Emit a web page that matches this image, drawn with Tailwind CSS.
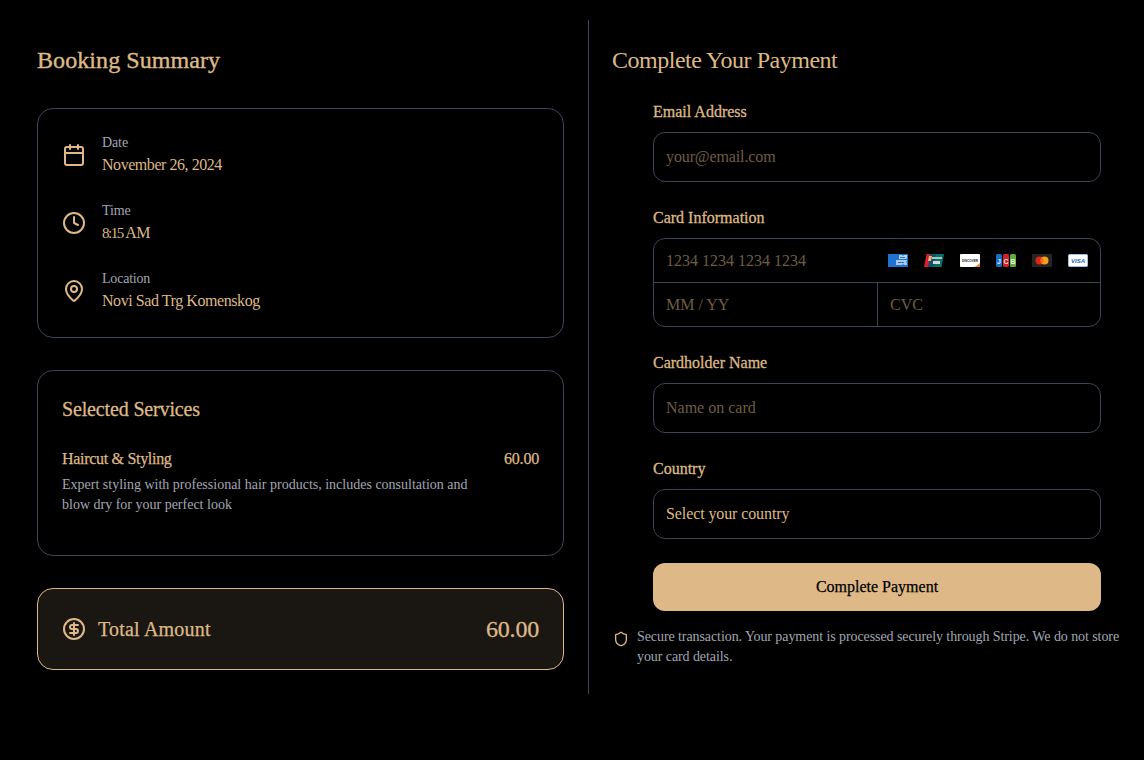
<!DOCTYPE html>
<html lang="en">
<head>
  <meta charset="UTF-8" />
  <meta name="viewport" content="width=device-width, initial-scale=1.0" />
  <title>Complete Your Payment</title>
  <script src="https://cdn.jsdelivr.net/npm/@tailwindcss/browser@4"></script>
</head>
<body class="bg-black text-[#deb887] font-['Liberation_Serif',serif] h-[760px] overflow-hidden">
  <div class="flex pt-5">
    <!-- Booking summary -->
    <div class="w-[589px] border-r border-[#3b4556] pl-[37px] pr-6 py-6">
      <h2 class="text-2xl h-8 leading-8 mb-8 tracking-[0.08px] [-webkit-text-stroke:0.4px_#deb887]">Booking Summary</h2>

      <div class="border border-[#3b4556] rounded-2xl p-6 flex flex-col gap-6 mb-8">
        <div class="flex items-center gap-4">
          <svg class="w-6 h-6" viewBox="0 0 24 24" fill="none" stroke="#deb887" stroke-width="2" stroke-linecap="round" stroke-linejoin="round"><path d="M8 2v4"/><path d="M16 2v4"/><rect x="3" y="4" width="18" height="18" rx="2"/><path d="M3 10h18"/></svg>
          <div>
            <p class="text-sm h-5 leading-5 text-[#a1a7b3] tracking-[-0.1px]">Date</p>
            <p class="text-base h-6 leading-6 tracking-[-0.45px]">November 26, 2024</p>
          </div>
        </div>
        <div class="flex items-center gap-4">
          <svg class="w-6 h-6" viewBox="0 0 24 24" fill="none" stroke="#deb887" stroke-width="2" stroke-linecap="round" stroke-linejoin="round"><circle cx="12" cy="12" r="10"/><path d="M12 6v6l4 2"/></svg>
          <div>
            <p class="text-sm h-5 leading-5 text-[#a1a7b3] tracking-[-0.1px]">Time</p>
            <p class="text-base h-6 leading-6 tracking-[-0.6px]"><span class="text-[15px] tracking-[-1.5px]">8:15</span> AM</p>
          </div>
        </div>
        <div class="flex items-center gap-4">
          <svg class="w-6 h-6" viewBox="0 0 24 24" fill="none" stroke="#deb887" stroke-width="2" stroke-linecap="round" stroke-linejoin="round"><path d="M20 10c0 4.993-5.539 10.193-7.399 11.799a1 1 0 0 1-1.202 0C9.539 20.193 4 14.993 4 10a8 8 0 0 1 16 0"/><circle cx="12" cy="10" r="3"/></svg>
          <div>
            <p class="text-sm h-5 leading-5 text-[#a1a7b3] tracking-[-0.2px]">Location</p>
            <p class="text-base h-6 leading-6 tracking-[-0.43px]">Novi Sad Trg Komenskog</p>
          </div>
        </div>
      </div>

      <div class="border border-[#3b4556] rounded-2xl p-6 h-[186px] mb-8">
        <h3 class="text-xl h-7 leading-7 mb-6 tracking-[-0.15px] [-webkit-text-stroke:0.3px_#deb887]">Selected Services</h3>
        <div class="flex justify-between">
          <div>
            <p class="text-base h-6 leading-6 tracking-[-0.3px] [-webkit-text-stroke:0.25px_#deb887]">Haircut &amp; Styling</p>
            <p class="text-sm leading-5 text-[#a1a7b3] mt-1">Expert styling with professional hair products, includes consultation and<br>blow dry for your perfect look</p>
          </div>
          <p class="text-base h-6 leading-6 tracking-[-0.2px] [-webkit-text-stroke:0.25px_#deb887]">60.00</p>
        </div>
      </div>

      <div class="border border-[#deb887] bg-[#1a1712] rounded-2xl p-6 flex items-center justify-between">
        <div class="flex items-center gap-3">
          <svg class="w-6 h-6" viewBox="0 0 24 24" fill="none" stroke="#deb887" stroke-width="2" stroke-linecap="round" stroke-linejoin="round"><circle cx="12" cy="12" r="10"/><path d="M16 8h-6a2 2 0 1 0 0 4h4a2 2 0 1 1 0 4H8"/><path d="M12 18V6"/></svg>
          <span class="text-xl leading-8 tracking-[0.2px] [-webkit-text-stroke:0.25px_#deb887]">Total Amount</span>
        </div>
        <span class="text-2xl leading-8 tracking-[-0.2px] [-webkit-text-stroke:0.3px_#deb887]">60.00</span>
      </div>
    </div>

    <!-- Payment form -->
    <div class="pl-[23px] py-6 w-[555px]">
      <h2 class="text-2xl h-8 leading-8 mb-6 tracking-[-0.48px]">Complete Your Payment</h2>

      <form class="w-[448px] ml-[41px] flex flex-col gap-6">
        <div>
          <label class="block text-base h-6 leading-6 mb-2 [-webkit-text-stroke:0.3px_#deb887]">Email Address</label>
          <input type="email" placeholder="your@email.com" class="block w-full h-[50px] px-3 bg-black border border-[#3b4556] rounded-xl text-base tracking-[-0.12px] outline-none placeholder:text-[#6f5c44]" />
        </div>

        <div>
          <label class="block text-base h-6 leading-6 mb-2 [-webkit-text-stroke:0.3px_#deb887]">Card Information</label>
          <div class="border border-[#3b4556] rounded-xl">
            <div class="flex items-center h-11 pl-3 pr-3 border-b border-[#3b4556]">
              <input placeholder="1234 1234 1234 1234" class="flex-1 min-w-0 bg-transparent text-base outline-none placeholder:text-[#6f5c44]" />
              <div class="flex gap-4">
                <!-- amex -->
                <svg class="w-5 h-[13px]" viewBox="0 0 20 13"><rect width="20" height="13" fill="#1f72cd"/><path d="M11 1h3l1 1 1-1h3v3l-1 1h-7z" fill="#b9d2f0"/><path d="M8 6h11v1l-1 1 1 1v2h-3l-1-1-1 1H8z" fill="#a9c8ec"/><rect x="12" y="3" width="5" height="1" fill="#1f72cd"/><rect x="10" y="8" width="6" height="1" fill="#1f72cd"/></svg>
                <!-- unionpay -->
                <svg class="w-5 h-[13px]" viewBox="0 0 20 13"><path d="M2.5 0H9L6.5 13H0z" fill="#d6202c"/><path d="M6 0h8l-2.5 13H4z" fill="#15506b"/><path d="M12 0h8l-2.5 13H10z" fill="#0b6f6c"/><path d="M5 2h3l-1 5H4z" fill="#e8b27c"/><rect x="8" y="3" width="10" height="2" fill="#a8c4bc"/><rect x="9" y="7" width="7" height="3" fill="#d0dcd8"/></svg>
                <!-- discover -->
                <svg class="w-5 h-[13px]" viewBox="0 0 20 13"><rect width="20" height="13" rx="1" fill="#fff"/><text x="10" y="7.6" font-size="3.1" font-family="Liberation Sans" font-weight="700" text-anchor="middle" fill="#222">DISCOVER</text><path d="M14 13q3-1 6-4v4z" fill="#f58220"/></svg>
                <!-- jcb -->
                <svg class="w-5 h-[13px]" viewBox="0 0 20 13"><rect width="6" height="13" rx="1.5" fill="#1a6fc4"/><rect x="7" width="6" height="13" rx="1.5" fill="#d5202a"/><rect x="14" width="6" height="13" rx="1.5" fill="#5fae3c"/><text x="3" y="9.5" font-size="7" font-family="Liberation Sans" font-weight="700" text-anchor="middle" fill="#e6eefa">J</text><text x="10" y="9.5" font-size="7" font-family="Liberation Sans" font-weight="700" text-anchor="middle" fill="#f5dcdc">C</text><text x="17" y="9.5" font-size="7" font-family="Liberation Sans" font-weight="700" text-anchor="middle" fill="#e6f2dc">B</text></svg>
                <!-- mastercard -->
                <svg class="w-5 h-[13px]" viewBox="0 0 20 13"><rect width="20" height="13" rx="1" fill="#252525"/><circle cx="7.5" cy="6.5" r="4" fill="#e2231a"/><circle cx="12.5" cy="6.5" r="4" fill="#f79e1b"/><path d="M10 3.4a4 4 0 0 1 0 6.2a4 4 0 0 1 0-6.2z" fill="#f26a1b"/></svg>
                <!-- visa -->
                <svg class="w-5 h-[13px]" viewBox="0 0 20 13"><rect x="0.5" y="0.5" width="19" height="12" rx="1" fill="#fff" stroke="#9fc0e8"/><text x="10" y="9" font-size="6" font-family="Liberation Sans" font-weight="700" font-style="italic" text-anchor="middle" fill="#2a66b5">VISA</text></svg>
              </div>
            </div>
            <div class="flex h-[43px]">
              <input placeholder="MM / YY" class="w-[224px] px-3 border-r border-[#3b4556] bg-transparent text-base outline-none placeholder:text-[#6f5c44]" />
              <input placeholder="CVC" class="flex-1 min-w-0 px-3 bg-transparent text-base outline-none placeholder:text-[#6f5c44]" />
            </div>
          </div>
        </div>

        <div>
          <label class="block text-base h-6 leading-6 mb-2 [-webkit-text-stroke:0.3px_#deb887]">Cardholder Name</label>
          <input placeholder="Name on card" class="block w-full h-[50px] px-3 bg-black border border-[#3b4556] rounded-xl text-base outline-none placeholder:text-[#6f5c44]" />
        </div>

        <div>
          <label class="block text-base h-6 leading-6 mb-2 [-webkit-text-stroke:0.3px_#deb887]">Country</label>
          <select class="block w-full h-[50px] px-3 bg-black border border-[#3b4556] rounded-xl text-base tracking-[-0.1px] outline-none appearance-none">
            <option>Select your country</option>
          </select>
        </div>

        <button type="button" class="h-12 bg-[#deb887] text-black rounded-xl text-base [-webkit-text-stroke:0.25px_#000]">Complete Payment</button>
      </form>

      <div class="flex items-start gap-2 mt-4 pl-px">
        <svg class="w-4 h-4 mt-[4px] shrink-0" viewBox="0 0 24 24" fill="none" stroke="#deb887" stroke-width="2" stroke-linecap="round" stroke-linejoin="round"><path d="M20 13c0 5-3.5 7.5-7.66 8.95a1 1 0 0 1-.67-.01C7.5 20.5 4 18 4 13V6a1 1 0 0 1 1-1c2 0 4.5-1.2 6.24-2.72a1.17 1.17 0 0 1 1.52 0C14.51 3.81 17 5 19 5a1 1 0 0 1 1 1z"/></svg>
        <p class="text-sm leading-5 text-[#a1a7b3] tracking-[-0.08px]">Secure transaction. Your payment is processed securely through Stripe. We do not store<br>your card details.</p>
      </div>
    </div>
  </div>
</body>
</html>
